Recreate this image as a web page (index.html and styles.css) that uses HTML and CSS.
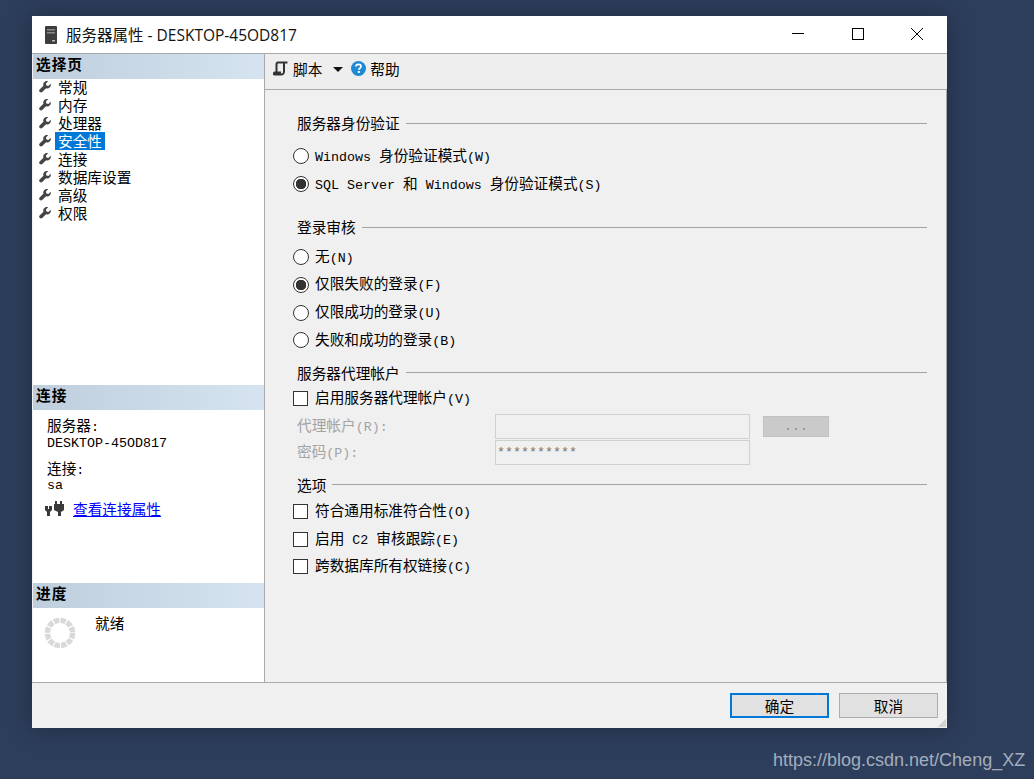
FILE: index.html
```html
<!DOCTYPE html>
<html lang="zh-CN">
<head>
    <meta charset="UTF-8">
    <title>服务器属性 - DESKTOP-45OD817</title>
    <link rel="stylesheet" href="styles.css">
</head>
<body>
    <svg class="icon-defs" width="0" height="0">
        <defs>
            <symbol id="wrench" viewBox="0 0 13 13">
                <path d="M12.6 3.1 10.2 5.4 8 4.9 7.5 2.7 9.9.4C8.3-.2 6.6.2 5.6 1.3 4.6 2.3 4.3 3.8 4.8 5.1L.7 9.2C0 9.9 0 11 .7 11.7L1 12c.7.7 1.8.7 2.5 0L7.6 7.9C9 8.4 10.5 8.1 11.5 7.1 12.6 6.1 13.1 4.6 12.6 3.1Z" fill="#444"/>
            </symbol>
        </defs>
    </svg>

    <div class="window">
        <div class="titlebar">
            <svg class="server-icon" width="12" height="18" viewBox="0 0 12 18">
                <rect width="12" height="18" rx="1" fill="#3d3d3d"/>
                <rect x="2" y="3" width="8" height="1.5" fill="#8a8a8a"/>
                <rect x="2" y="6" width="8" height="1.5" fill="#8a8a8a"/>
                <rect x="7" y="14" width="3" height="1.5" fill="#bdbdbd"/>
            </svg>
            <span class="title-text">服务器属性 - DESKTOP-45OD817</span>
            <div class="window-buttons">
                <svg width="58" height="14" viewBox="0 0 58 14"><path d="M22 6.5H34" stroke="#000" stroke-width="1"/></svg>
                <svg width="58" height="14" viewBox="0 0 58 14"><rect x="23.5" y="1.5" width="11" height="11" fill="none" stroke="#000"/></svg>
                <svg width="58" height="14" viewBox="0 0 58 14"><path d="M23 1 35 13M35 1 23 13" stroke="#000" fill="none"/></svg>
            </div>
        </div>

        <div class="content">
            <div class="sidebar">
                <div class="side-head">选择页</div>
                <ul class="page-list">
                    <li><svg class="wrench"><use href="#wrench"/></svg><span>常规</span></li>
                    <li><svg class="wrench"><use href="#wrench"/></svg><span>内存</span></li>
                    <li><svg class="wrench"><use href="#wrench"/></svg><span>处理器</span></li>
                    <li class="selected"><svg class="wrench"><use href="#wrench"/></svg><span>安全性</span></li>
                    <li><svg class="wrench"><use href="#wrench"/></svg><span>连接</span></li>
                    <li><svg class="wrench"><use href="#wrench"/></svg><span>数据库设置</span></li>
                    <li><svg class="wrench"><use href="#wrench"/></svg><span>高级</span></li>
                    <li><svg class="wrench"><use href="#wrench"/></svg><span>权限</span></li>
                </ul>

                <div class="side-head">连接</div>
                <div class="conn-info">
                    <div class="conn-label">服务器<span class="en">:</span></div>
                    <div class="conn-value en">DESKTOP-45OD817</div>
                    <div class="conn-label second">连接<span class="en">:</span></div>
                    <div class="conn-value en">sa</div>
                    <div class="conn-link">
                        <svg width="20" height="16" viewBox="0 0 20 16">
                            <path d="M0 5H3V8H4V5H7V9L5 11V15H2V11L0 9Z" fill="#3a3a3a"/>
                            <path d="M10 0H12V3H15V0H17V3H19V9L16 11V15H13V11L9 9V3H10Z" fill="#3a3a3a"/>
                        </svg>
                        <a href="#">查看连接属性</a>
                    </div>
                </div>

                <div class="side-head">进度</div>
                <div class="progress">
                    <svg width="32" height="32" viewBox="0 0 32 32">
                        <circle cx="16" cy="16" r="12.6" fill="none" stroke="#d9d9d9" stroke-width="5.4" stroke-dasharray="5.4 1.2"/>
                    </svg>
                    <span>就绪</span>
                </div>
            </div>

            <div class="main">
                <div class="toolbar">
                    <svg class="script-icon" width="15" height="15" viewBox="0 0 15 15">
                        <path d="M5 1.5H14.5M5 1.5C4 1.5 3.5 2.5 3.5 3.5V11.5M11 1.5V10.5C11 12 10 13.5 9 13.5H1.5C.5 13.5.5 11.5 2 11.5H8" fill="none" stroke="#333" stroke-width="2"/>
                    </svg>
                    <span class="tool-label">脚本</span>
                    <span class="arrow"></span>
                    <svg class="help-icon" width="15" height="15" viewBox="0 0 15 15">
                        <circle cx="7.5" cy="7.5" r="7.5" fill="#1e8ad6"/>
                        <path d="M5 5.6C5 4.2 6.1 3.4 7.5 3.4S10 4.2 10 5.5C10 7.2 7.8 7.1 7.8 8.8" fill="none" stroke="#fff" stroke-width="1.8"/>
                        <rect x="6.8" y="10" width="2" height="2" fill="#fff"/>
                    </svg>
                    <span class="tool-label">帮助</span>
                </div>

                <div class="form">
                    <div class="group-head first"><span>服务器身份验证</span></div>
                    <div class="rows auth">
                        <label class="row"><input type="radio" name="auth"><span><span class="en">Windows </span>身份验证模式<span class="en">(W)</span></span></label>
                        <label class="row"><input type="radio" name="auth" checked><span><span class="en">SQL Server </span>和<span class="en"> Windows </span>身份验证模式<span class="en">(S)</span></span></label>
                    </div>

                    <div class="group-head audit"><span>登录审核</span></div>
                    <div class="rows tight audit-rows">
                        <label class="row"><input type="radio" name="audit"><span>无<span class="en">(N)</span></span></label>
                        <label class="row"><input type="radio" name="audit" checked><span>仅限失败的登录<span class="en">(F)</span></span></label>
                        <label class="row"><input type="radio" name="audit"><span>仅限成功的登录<span class="en">(U)</span></span></label>
                        <label class="row"><input type="radio" name="audit"><span>失败和成功的登录<span class="en">(B)</span></span></label>
                    </div>

                    <div class="group-head proxy"><span>服务器代理帐户</span></div>
                    <label class="row proxy-check"><input type="checkbox"><span>启用服务器代理帐户<span class="en">(V)</span></span></label>
                    <div class="field">
                        <span class="field-label">代理帐户<span class="en">(R):</span></span>
                        <input class="text-box" type="text" disabled>
                        <button class="browse" disabled>...</button>
                    </div>
                    <div class="field">
                        <span class="field-label">密码<span class="en">(P):</span></span>
                        <input class="text-box" type="text" value="**********" disabled>
                    </div>

                    <div class="group-head options"><span>选项</span></div>
                    <div class="rows tight option-rows">
                        <label class="row"><input type="checkbox"><span>符合通用标准符合性<span class="en">(O)</span></span></label>
                        <label class="row"><input type="checkbox"><span>启用<span class="en"> C2 </span>审核跟踪<span class="en">(E)</span></span></label>
                        <label class="row"><input type="checkbox"><span>跨数据库所有权链接<span class="en">(C)</span></span></label>
                    </div>
                </div>
            </div>
        </div>

        <div class="footer">
            <button class="btn default">确定</button>
            <button class="btn">取消</button>
            <span class="grip"></span>
        </div>
    </div>

    <div class="watermark">https://blog.csdn.net/Cheng_XZ</div>
</body>
</html>
```

FILE: styles.css
```css
* {
    margin: 0;
    padding: 0;
    box-sizing: border-box;
}

html, body {
    height: 100%;
}

body {
    position: relative;
    overflow: hidden;
    padding: 16px 0 0 32px;
    background: #2d3e5c;
    color: #000;
    font-family: "Noto Sans CJK SC", sans-serif;
    font-size: 14.67px;
    line-height: 18px;
}

.en {
    font-family: "Liberation Mono", monospace;
    font-size: 13.33px;
    white-space: pre;
}

.icon-defs {
    position: absolute;
}

/* Window */
.window {
    display: flex;
    flex-direction: column;
    width: 915px;
    height: 712px;
    background: #f0f0f0;
    box-shadow: 0 0 24px rgba(0, 0, 0, 0.3);
}

.titlebar {
    display: flex;
    align-items: center;
    flex: none;
    height: 38px;
    padding-left: 13px;
    background: #fff;
    border-bottom: 1px solid #a9a9a9;
}

.server-icon {
    margin-right: 9px;
}

.title-text {
    font-family: "Open Sans", "Noto Sans CJK SC", sans-serif;
    font-size: 15.5px;
    color: #111;
}

.window-buttons {
    display: flex;
    margin: -2px 1px 0 auto;
}

.window-buttons svg {
    display: block;
    margin-left: 1px;
}

.content {
    display: flex;
    flex: 1;
    min-height: 0;
    border-bottom: 1px solid #a9a9a9;
}

/* Left pane */
.sidebar {
    display: flex;
    flex-direction: column;
    flex: none;
    width: 232px;
    margin-left: 1px;
    background: #fff;
    border-right: 1px solid #a9a9a9;
}

.side-head {
    flex: none;
    height: 25px;
    padding-left: 3px;
    background: linear-gradient(90deg, #bfcedd, #d6e4f1);
    font-weight: 700;
    letter-spacing: 1px;
    line-height: 19px;
}

.page-list {
    flex: none;
    height: 306px;
    margin-top: -1px;
    margin-bottom: 1px;
    list-style: none;
}

.page-list li {
    display: flex;
    align-items: center;
    height: 18px;
    padding-left: 6px;
}

.wrench {
    flex: none;
    width: 12px;
    height: 12px;
    margin-right: 4px;
}

.page-list span {
    padding: 0 3px;
    line-height: 18px;
}

.page-list .selected span {
    background: #0078d7;
    color: #fff;
}

.conn-info {
    flex: none;
    height: 173px;
    padding: 7px 0 0 14px;
}

.conn-label {
    height: 16px;
    line-height: 16px;
}

.conn-value {
    height: 16px;
    margin-top: 3px;
    line-height: 16px;
}

.conn-label.second {
    margin-top: 8px;
}

.conn-label.second + .conn-value {
    margin-top: 2px;
}

.conn-link {
    display: flex;
    align-items: center;
    margin: 6px 0 0 -2px;
}

.conn-link svg {
    margin-right: 8px;
}

.conn-link a {
    color: #00f;
}

.progress {
    display: flex;
    flex: 1;
    align-items: flex-start;
    padding: 9px 0 0 11px;
}

.progress span {
    margin: -2px 0 0 19px;
    line-height: 16px;
}

/* Right pane */
.main {
    flex: 1;
    min-width: 0;
    border-right: 1px solid #a9a9a9;
}

.toolbar {
    display: flex;
    align-items: center;
    height: 36px;
    margin-right: -1px;
    padding: 0 0 6px 8px;
    background: #eee;
    border-bottom: 1px solid #a9a9a9;
}

.script-icon {
    margin-right: 5px;
}

.arrow {
    width: 0;
    height: 0;
    margin: 1px 8px 0 11px;
    border-style: solid;
    border-width: 5px 5px 0;
    border-color: #111 transparent transparent;
}

.help-icon {
    margin-right: 4px;
}

.form {
    padding: 0 19px 0 28px;
}

.group-head {
    display: flex;
    align-items: center;
    height: 18px;
    padding-left: 3px;
}

.group-head span {
    margin-left: 1px;
}

.group-head::after {
    content: "";
    flex: 1;
    height: 1px;
    margin-left: 6px;
    background: #a3a3a3;
}

.group-head.first {
    margin-top: 24px;
}

.group-head.audit {
    margin-top: 20px;
}

.group-head.proxy {
    margin-top: 9.5px;
}

.group-head.options {
    margin-top: 11px;
}

.rows.auth {
    margin-top: 10px;
}

.rows.audit-rows {
    margin-top: 7.5px;
}

.rows.option-rows {
    margin-top: 4px;
}

.row {
    display: flex;
    align-items: center;
    height: 28px;
}

.rows.tight .row {
    height: 27.67px;
}

.row.proxy-check {
    height: 24px;
    margin-top: 5px;
}

.row input {
    flex: none;
    width: 16px;
    height: 16px;
    margin-right: 6px;
    appearance: none;
    background: #fff;
    border: 1px solid #333;
}

.row input[type="radio"] {
    border-radius: 50%;
}

.row input[type="radio"]:checked {
    background: radial-gradient(circle, #333 0 5px, #fff 5.5px);
}

.row input[type="checkbox"] {
    width: 15px;
    height: 15px;
    margin-right: 7px;
}

.field {
    display: flex;
    align-items: center;
    height: 25px;
    margin-top: 1px;
    padding-left: 4px;
    color: #a3a3a3;
}

.row + .field {
    margin-top: 3px;
}

.field-label {
    flex: none;
    width: 198px;
}

.text-box {
    flex: none;
    width: 255px;
    height: 25px;
    padding-left: 1px;
    background: #f0f0f0;
    border: 1px solid #d0d0d0;
    outline: none;
    color: #6d6d6d;
    font-family: "Liberation Mono", monospace;
    font-size: 13.33px;
}

.browse {
    width: 66px;
    height: 21px;
    margin-left: 13px;
    background: #cacaca;
    border: 1px solid #c2c2c2;
    color: #8a8a8a;
    font-family: "Liberation Mono", monospace;
    font-size: 13.33px;
}

/* Footer */
.footer {
    position: relative;
    display: flex;
    align-items: flex-start;
    justify-content: flex-end;
    flex: none;
    height: 45px;
    padding: 10px 9px 0 0;
}

.btn {
    width: 99px;
    height: 25px;
    margin-left: 10px;
    background: #e1e1e1;
    border: 1px solid #adadad;
    font-family: "Noto Sans CJK SC", sans-serif;
    font-size: 14.67px;
    line-height: 21px;
}

.btn.default {
    border: 2px solid #0078d7;
}

.grip {
    position: absolute;
    right: 1px;
    bottom: 1px;
    width: 8px;
    height: 8px;
    background: linear-gradient(135deg, transparent 50%, #d2d2d2 50%);
}

.watermark {
    position: absolute;
    top: 750px;
    left: 773px;
    color: #a3adbc;
    font-family: "Liberation Sans", sans-serif;
    font-size: 18px;
    line-height: 20px;
}
```
